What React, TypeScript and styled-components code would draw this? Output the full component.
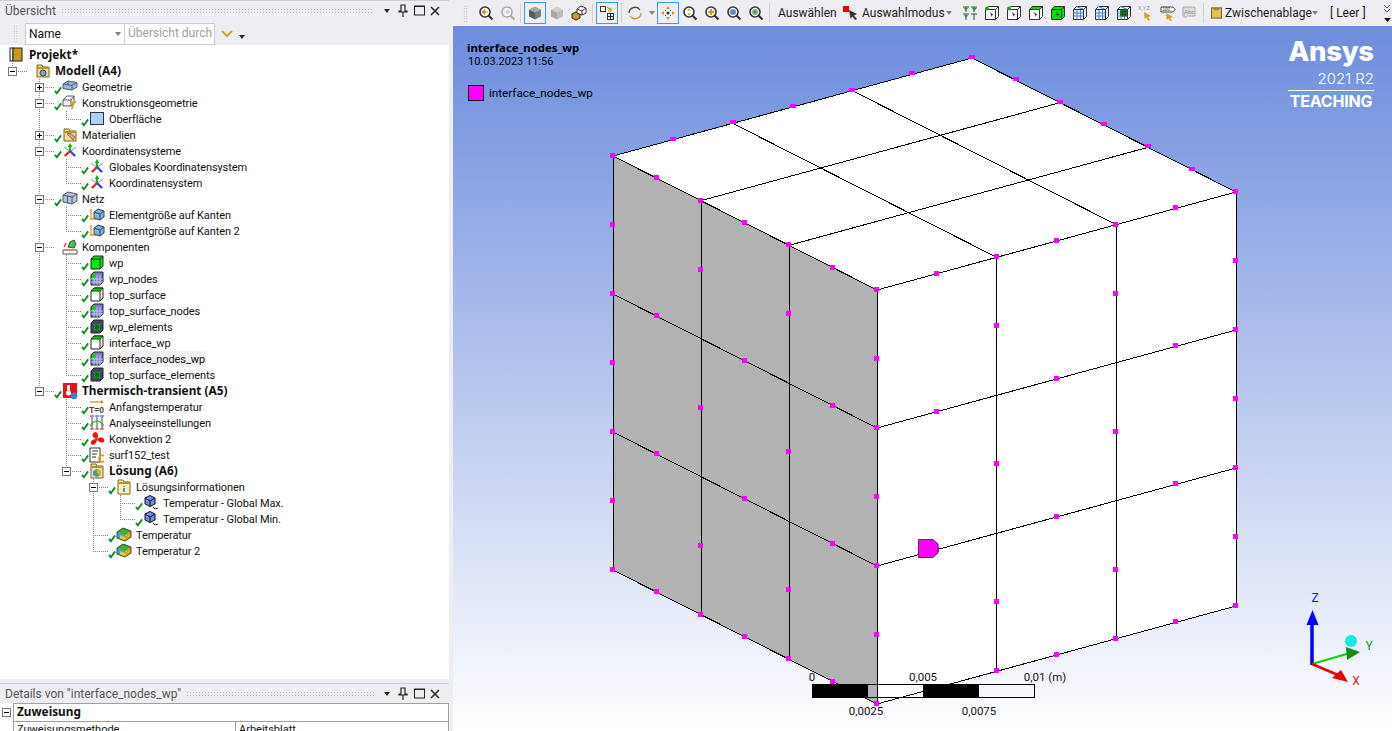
import styled, { createGlobalStyle } from "styled-components";
import { ReactNode } from "react";

const UI_FONT = `Roboto, "Noto Sans", sans-serif`;
const BOLD_FONT = `"Noto Sans", "Open Sans", sans-serif`;

const GlobalStyle = createGlobalStyle`
  html, body {
    margin: 0;
    height: 100%;
    overflow: hidden;
    background: #eef0f8;
  }
  * {
    box-sizing: border-box;
  }
`;

const Shell = styled.div`
  display: grid;
  grid-template-columns: 449px 943px;
  width: 1392px;
  height: 731px;
  overflow: hidden;
  font-family: ${UI_FONT};
  font-size: 11px;
  color: #111;
`;

/* ---------- left side ---------- */

const LeftPane = styled.div`
  display: flex;
  flex-direction: column;
  height: 731px;
  overflow: hidden;
  background: #fff;
`;

const PaneHeader = styled.div`
  display: flex;
  align-items: center;
  flex: none;
  height: 20px;
  padding: 0 5px;
  gap: 5px;
  background: #eeeef2;
  border-top: 1px solid #ccced8;
  color: #555;
  font-size: 12px;
`;

const HeaderDots = styled.div`
  flex: 1;
  height: 6px;
  background-image: radial-gradient(#b4b4b8 0.7px, transparent 0.8px);
  background-size: 3px 3px;
`;

const HeaderIcons = styled.div`
  display: flex;
  align-items: center;
  margin-right: 1px;
`;

const HeaderIconCell = styled.div`
  display: flex;
  align-items: center;
  justify-content: center;
  width: 16px;
  height: 16px;
`;

const FilterBar = styled.div`
  display: flex;
  align-items: center;
  flex: none;
  height: 25px;
  padding: 2px 0 0 13px;
  background: #eeeef2;
`;

const Gripper = styled.div`
  flex: none;
  width: 5px;
  height: 17px;
  background-image: radial-gradient(#aaa 0.7px, transparent 0.8px);
  background-size: 2.5px 2.5px;
`;

const SelectBox = styled.div`
  display: flex;
  align-items: center;
  justify-content: space-between;
  width: 100px;
  height: 22px;
  margin-left: 7px;
  padding: 0 3px;
  background: #fff;
  border: 1px solid #ccced6;
  font-size: 12px;
`;

const SearchBox = styled.div`
  width: 90px;
  height: 22px;
  padding: 2px 3px;
  background: #fff;
  border: 1px solid #ccced6;
  border-left: none;
  color: #a0a0a0;
  font-size: 12px;
  white-space: nowrap;
  overflow: hidden;
`;

const Caret = styled.span<{ $color?: string }>`
  display: inline-block;
  width: 0;
  height: 0;
  border-left: 3.5px solid transparent;
  border-right: 3.5px solid transparent;
  border-top: 4px solid ${(p) => p.$color ?? "#808080"};
`;

const FilterIcon = styled.div<{ $drop?: number }>`
  display: flex;
  margin-left: 4px;
  margin-top: ${(p) => p.$drop ?? 0}px;
`;

const Tree = styled.div`
  flex: 1;
  min-height: 0;
  padding-top: 2px;
  background: #fff;
  overflow: hidden;
`;

const Row = styled.div`
  display: flex;
  height: 16px;
  white-space: nowrap;
`;

const RootSpacer = styled.div`
  flex: none;
  width: 9px;
`;

const Guide = styled.div<{ $on?: boolean }>`
  flex: none;
  width: 27px;
  height: 16px;
  background: ${(p) =>
    p.$on
      ? "repeating-linear-gradient(to bottom, #808080 0 1px, transparent 1px 2px) 12px 0 / 1px 100% no-repeat"
      : "none"};
`;

const Connector = styled.div<{ $last?: boolean }>`
  display: flex;
  align-items: center;
  flex: none;
  width: 27px;
  height: 16px;
  padding-left: 8px;
  background:
    repeating-linear-gradient(to bottom, #808080 0 1px, transparent 1px 2px) 12px 0 / 1px ${(p) => (p.$last ? "8px" : "100%")} no-repeat,
    repeating-linear-gradient(to right, #808080 0 1px, transparent 1px 2px) 12px 8px / 15px 1px no-repeat;
`;

const Toggle = styled.div`
  position: relative;
  flex: none;
  width: 9px;
  height: 9px;
  background: #fff;
  border: 1px solid #777;

  &::before {
    content: "";
    position: absolute;
    left: 1px;
    top: 3px;
    width: 5px;
    height: 1px;
    background: #000;
  }
`;

const PlusToggle = styled(Toggle)`
  &::after {
    content: "";
    position: absolute;
    left: 3px;
    top: 1px;
    width: 1px;
    height: 5px;
    background: #000;
  }
`;

const CheckSlot = styled.div`
  display: flex;
  align-items: flex-end;
  flex: none;
  width: 8px;
  height: 16px;
`;

const IconSlot = styled.div`
  flex: none;
  width: 16px;
  height: 16px;
  margin-right: 4px;
`;

const Label = styled.span<{ $bold?: boolean; $selected?: boolean }>`
  height: 16px;
  padding: 0 1px;
  margin-left: -1px;
  line-height: ${(p) => (p.$bold ? "15px" : "17px")};
  letter-spacing: ${(p) => (p.$bold ? "0" : "-0.1px")};
  font-family: ${(p) => (p.$bold ? BOLD_FONT : UI_FONT)};
  font-size: ${(p) => (p.$bold ? "11.8px" : "11px")};
  font-weight: ${(p) => (p.$bold ? 700 : 400)};
  background: ${(p) => (p.$selected ? "#f0f0f0" : "transparent")};
`;

const Splitter = styled.div`
  flex: none;
  height: 4px;
  background: #eeeef2;
`;

const DetailsSection = styled.div`
  display: flex;
  flex: none;
  height: 28px;
  overflow: hidden;
`;

const DetailsGutter = styled.div`
  flex: none;
  width: 13px;
  padding: 5px 0 0 2px;
`;

const DetailsTable = styled.div`
  flex: 1;
  border-top: 1px solid #a0a0a0;
  border-left: 1px solid #a0a0a0;
  border-right: 1px solid #a0a0a0;
`;

const GroupRow = styled.div`
  height: 18px;
  padding-left: 3px;
  border-bottom: 1px solid #a0a0a0;
  font-family: ${BOLD_FONT};
  font-size: 11.8px;
  font-weight: 700;
  line-height: 15px;
`;

const PropRow = styled.div`
  display: grid;
  grid-template-columns: 221px 1fr;
  height: 18px;
  line-height: 16px;
`;

const PropCell = styled.div`
  padding-left: 3px;

  & + & {
    border-left: 1px solid #a0a0a0;
  }
`;

/* ---------- right side ---------- */

const RightPane = styled.div`
  display: flex;
  flex-direction: column;
  height: 731px;
  background: #eeeef2;
`;

const Toolbar = styled.div`
  display: flex;
  align-items: center;
  flex: none;
  height: 26px;
  padding: 0 0 0 14px;
  white-space: nowrap;
  background: #eeeef2;
`;

const ToolbarGrip = styled(Gripper)`
  margin-right: 7px;
`;

const ToolButton = styled.div<{ $active?: boolean }>`
  display: flex;
  align-items: center;
  justify-content: center;
  flex: none;
  width: 22px;
  height: 22px;
  border: 1px solid ${(p) => (p.$active ? "#3399ff" : "transparent")};
`;

const Separator = styled.div<{ $before?: number; $after?: number }>`
  flex: none;
  width: 1px;
  height: 20px;
  margin-left: ${(p) => p.$before ?? 1}px;
  margin-right: ${(p) => p.$after ?? 3}px;
  background: #cfcfd4;
`;

const ToolText = styled.div<{ $w: number; $ml?: number; $pr?: number }>`
  display: flex;
  align-items: center;
  justify-content: space-between;
  flex: none;
  width: ${(p) => p.$w}px;
  margin-left: ${(p) => p.$ml ?? 0}px;
  padding-right: ${(p) => p.$pr ?? 0}px;
  font-size: 12px;
  color: #1b1b1b;
`;

const CaretButton = styled.div`
  display: flex;
  align-items: center;
  justify-content: center;
  flex: none;
  width: 11px;
  height: 22px;
`;

const Overflow = styled.div`
  display: flex;
  flex: none;
  margin-left: 9px;
`;

const Viewport = styled.div`
  position: relative;
  flex: 1;
  margin-left: 4px;
  background: linear-gradient(to bottom, #6c8cdd 0%, #ffffff 100%);
  overflow: hidden;
`;

const Canvas = styled.svg`
  display: block;
  width: 939px;
  height: 705px;
`;

const Annotation = styled.div`
  position: absolute;
  left: 14px;
  top: 15px;
  font-size: 11.7px;
  line-height: 14px;
  color: #000;
`;

const AnnotationTitle = styled.div`
  font-family: ${BOLD_FONT};
  font-size: 11.4px;
  font-weight: 700;
`;

const AnnotationDate = styled.div`
  margin-left: 1px;
  font-size: 11px;
`;

const Legend = styled.div`
  display: flex;
  align-items: center;
  gap: 5px;
  margin: 16px 0 0 1px;
`;

const LegendSwatch = styled.div`
  width: 16px;
  height: 16px;
  background: #ff00ff;
  border: 1px solid #000;
`;

const Brand = styled.div`
  position: absolute;
  right: 18px;
  top: 8px;
  width: 86px;
  display: flex;
  flex-direction: column;
  align-items: flex-end;
  color: #fff;
  font-family: Inter, "Noto Sans", sans-serif;
`;

const BrandName = styled.div`
  width: 100%;
  text-align: center;
  font-size: 27.5px;
  line-height: 35px;
  font-weight: 800;
  letter-spacing: -0.3px;
  white-space: nowrap;
`;

const BrandRelease = styled.div`
  font-size: 15px;
  line-height: 18px;
  margin-top: 1px;
  font-weight: 300;
`;

const BrandEdition = styled.div`
  width: 100%;
  margin-top: 2px;
  border-top: 1px solid #fff;
  font-size: 16px;
  line-height: 21px;
  font-weight: 700;
  letter-spacing: -0.2px;
  text-align: center;
`;

/* ---------- icons ---------- */

const Check = () => (
  <svg width="9" height="9" viewBox="0 0 9 9">
    <path d="M1 5 L3.2 7.6 L8 1" fill="none" stroke="#0a8a1e" strokeWidth="2" />
  </svg>
);

const treeIcons: Record<string, ReactNode> = {
  project: (
    <>
      <rect x="1" y="1" width="3" height="13" fill="#f4f4f4" stroke="#222" />
      <rect x="4" y="1" width="9" height="13" fill="#c89a10" stroke="#222" />
    </>
  ),
  model: (
    <>
      <path d="M2 14V2h5l1 2h6v10z" fill="#f2dc9b" stroke="#7a6320" />
      <rect x="2" y="4" width="12" height="2" fill="#b8952a" />
      <circle cx="8" cy="10" r="3" fill="#7ea7c8" stroke="#345" />
    </>
  ),
  geometry: (
    <>
      <path d="M1 5 L6 2 L15 3.5 V8 L10 11 L1 9.5z" fill="#9db8dc" stroke="#4a5a70" />
      <path d="M1 5 L10 6.5 V11 M10 6.5 L15 3.5 M6 2 V6" fill="none" stroke="#4a5a70" />
    </>
  ),
  construction: (
    <>
      <path d="M1 5 L5 1 H12 V8 L9 11 H1z" fill="#fff" stroke="#555" />
      <path d="M1 5 H9 V11 M9 5 L12 1" fill="none" stroke="#555" />
      <path d="M12 6 L10 14 M9.5 8 L14 7" stroke="#d8a020" strokeWidth="1.8" fill="none" />
    </>
  ),
  surface: <rect x="1.5" y="1.5" width="13" height="12" fill="#a9d2fb" stroke="#333" />,
  materials: (
    <>
      <path d="M2 14V2h5l1 2h6v10z" fill="#f2dc9b" stroke="#7a6320" />
      <rect x="2" y="4" width="12" height="2" fill="#b8952a" />
      <path d="M5 7 L11 13 L13 10 L8 6z" fill="#e0a27a" stroke="#966" />
    </>
  ),
  coords: (
    <>
      <path d="M2 4 L14 13 M14 4 L2 13" stroke="#9fb0b8" strokeWidth="1.2" />
      <path d="M8 8 V3" stroke="#16b316" strokeWidth="2" />
      <path d="M8 8 L3 13" stroke="#e22" strokeWidth="2.4" />
      <path d="M8 8 L13 13" stroke="#2a4fd0" strokeWidth="2.4" />
      <path d="M8 0 L5.5 4 H10.5z" fill="#16b316" />
    </>
  ),
  mesh: (
    <>
      <path d="M1 4 L6 1 L15 3 V10 L10 13 L1 11z" fill="#b5c3d6" stroke="#556" />
      <path d="M1 4 L10 6 V13 M10 6 L15 3 M5.5 5 V12" fill="none" stroke="#556" />
    </>
  ),
  sizing: (
    <>
      <path d="M2 2 V12 H10" fill="none" stroke="#d8a020" strokeWidth="1.4" />
      <path d="M5 5 L9 2 L15 4 V10 L11 13 L5 11z" fill="#7fb4e6" stroke="#345" />
      <path d="M5 5 L11 7 V13 M11 7 L15 4" fill="none" stroke="#345" />
    </>
  ),
  components: (
    <>
      <path d="M6 8 L8 3 L12 1 L14 5 L12 9z" fill="#43c843" stroke="#444" />
      <path d="M1 11 H15 V15 H1z" fill="#fff" stroke="#555" />
      <path d="M1 11 H15" stroke="#b89a50" strokeWidth="1.5" />
      <path d="M4 4 L2 8" stroke="#e22" strokeWidth="1.2" />
    </>
  ),
  solid: (
    <>
      <path d="M2 4 L5 1 H14 V11 L11 14 H2z" fill="#00ee00" stroke="#222" />
      <path d="M2 4 H11 V14 M11 4 L14 1" fill="none" stroke="#222" />
    </>
  ),
  nodes: (
    <>
      <path d="M2 4 L5 1 H14 V11 L11 14 H2z" fill="#7a7ad0" stroke="#222" />
      <path d="M2 8 H14 M2 11 H14 M5 4 V14 M8 4 V14 M11 4 V14" stroke="#e4e4f4" strokeWidth="0.7" />
      <circle cx="5" cy="5" r="2.2" fill="#10d010" />
    </>
  ),
  face: (
    <>
      <path d="M2 4 L5 1 H14 V11 L11 14 H2z" fill="#fff" stroke="#222" />
      <path d="M2 4 L5 1 H14 L11 4z" fill="#00e000" stroke="#222" />
      <path d="M11 4 V14" stroke="#222" />
    </>
  ),
  elements: (
    <>
      <path d="M2 4 L5 1 H14 V11 L11 14 H2z" fill="#44446a" stroke="#222" />
      <rect x="5" y="5" width="6" height="6" fill="#10e010" />
      <path d="M5 7 H11 M5 9 H11 M7 5 V11 M9 5 V11" stroke="#111" strokeWidth="0.7" />
    </>
  ),
  thermal: (
    <>
      <rect x="1" y="0" width="14" height="15" fill="#ee1111" />
      <rect x="5" y="2" width="3" height="8" fill="#fff" />
      <circle cx="6.5" cy="10" r="2.5" fill="#fff" />
      <circle cx="12" cy="13" r="3.4" fill="#3f7fd8" />
    </>
  ),
  init: (
    <>
      <path d="M1 3 H13" stroke="#c09020" strokeWidth="1.2" />
      <path d="M12 1 L15 3 L12 5z" fill="#c09020" />
      <text x="0" y="14" fontSize="8.5" fontWeight="700" fill="#444" fontFamily="Liberation Sans">T=0</text>
    </>
  ),
  analysis: (
    <>
      <path d="M3 2 V14 M8 2 V14 M13 2 V14" stroke="#444" />
      <path d="M1 1 H5 M6 1 H10 M11 1 H15" stroke="#2222dd" />
      <path d="M1 14 H5 M6 14 H10 M11 14 H15" stroke="#dd2222" />
      <path d="M1 11 Q8 1 15 11" fill="none" stroke="#18b018" strokeWidth="1.2" />
    </>
  ),
  fan: (
    <>
      <path d="M8 8 C3 7 2 3 6 1 C9 1 10 5 8 8z" fill="#ee1111" />
      <path d="M8 8 C13 5 16 7 15 11 C12 12 9 11 8 8z" fill="#ee1111" />
      <path d="M8 8 C8 12 5 15 2 13 C1 10 4 8 8 8z" fill="#ee1111" />
    </>
  ),
  command: (
    <>
      <rect x="1" y="1" width="10" height="14" fill="#fff" stroke="#333" />
      <path d="M3 4 H9 M3 7 H8 M3 10 H7" stroke="#333" />
      <path d="M15 9 A3 3.2 0 1 0 15 14" fill="none" stroke="#d8a020" strokeWidth="1.8" />
    </>
  ),
  solution: (
    <>
      <path d="M2 15V1h5l1 2h6v12z" fill="#e8e0c0" stroke="#7a6320" />
      <rect x="2" y="3" width="12" height="2" fill="#b8952a" />
      <path d="M4 8 L8 6 L12 8 V12 L8 14 L4 12z" fill="#4ab04a" />
      <path d="M8 6 L12 8 V12 L8 10z" fill="#e8b020" />
      <path d="M4 8 L8 10 V14 L4 12z" fill="#3f8fd8" />
    </>
  ),
  info: (
    <>
      <path d="M2 15V1h5l1 2h6v12z" fill="#fbf0b8" stroke="#7a6320" />
      <rect x="2" y="3" width="12" height="2" fill="#b8952a" />
      <path d="M8 7 V8 M8 9 V13" stroke="#2a6fd0" strokeWidth="1.5" />
    </>
  ),
  probe: (
    <>
      <path d="M2 3 L7 0.5 L12 3 V9 L7 11.5 L2 9z" fill="#6f8fe8" stroke="#111" />
      <path d="M2 3 L7 6 L12 3 M7 6 V11.5" fill="none" stroke="#111" />
      <path d="M10 12 L12 14 L15 13" fill="none" stroke="#222" />
    </>
  ),
  result: (
    <>
      <path d="M1 5 L7 1 L15 4 V10 L9 14 L1 11z" fill="#888" />
      <path d="M1 5 L9 8 V14 L1 11z" fill="#2fa8d8" />
      <path d="M9 8 L15 4 V10 L9 14z" fill="#e8a020" />
      <path d="M1 5 L7 1 L15 4 L9 8z" fill="#34b334" />
      <path d="M4 8 L9 10 V14 L4 12z" fill="#e8d020" />
      <path d="M1 5 L7 1 L15 4 V10 L9 14 L1 11z" fill="none" stroke="#444" />
    </>
  ),
};

const TreeIcon = ({ name }: { name: string }) => (
  <svg width="16" height="16" viewBox="0 0 16 16">
    {treeIcons[name]}
  </svg>
);

const Lens = ({ children, color = "#333" }: { children?: ReactNode; color?: string }) => (
  <svg width="16" height="16" viewBox="0 0 16 16">
    <circle cx="7" cy="7" r="5" fill="#fff" stroke={color} strokeWidth="1.6" />
    <path d="M10.5 10.5 L14.5 14.5" stroke={color} strokeWidth="2.2" />
    {children}
  </svg>
);

const Cube = ({ top, left, right }: { top: string; left: string; right: string }) => (
  <svg width="16" height="16" viewBox="0 0 16 16">
    <path d="M2 4.5 L8 1.5 L14 4.5 L8 7.5z" fill={top} />
    <path d="M2 4.5 L8 7.5 V14.5 L2 11.5z" fill={left} />
    <path d="M14 4.5 L8 7.5 V14.5 L14 11.5z" fill={right} />
  </svg>
);

const GridCube = ({ dark }: { dark?: boolean }) => (
  <svg width="16" height="16" viewBox="0 0 16 16">
    <path d="M1.5 4.5 L4.5 1.5 H14.5 V11.5 L11.5 14.5 H1.5z" fill="#e4eefa" stroke="#333" />
    <path d="M1.5 8 H11.5 M1.5 11 H11.5 M5 4.5 V14.5 M8.5 4.5 V14.5 M4.5 1.5 L11.5 4.5" stroke="#4f82c8" fill="none" />
    {dark && <rect x="4" y="4.5" width="7" height="7" fill="#149c14" />}
    {dark && <path d="M4 7 H11 M4 9.5 H11 M6.5 4.5 V11.5 M9 4.5 V11.5" stroke="#222" strokeWidth="0.7" />}
    <path d="M1.5 4.5 H11.5 V14.5 M11.5 4.5 L14.5 1.5" fill="none" stroke="#333" />
  </svg>
);

const CornerCube = ({ top, side, dot }: { top?: string; side?: string; dot?: boolean }) => (
  <svg width="16" height="16" viewBox="0 0 16 16">
    <path d="M1.5 4.5 L4.5 1.5 H14.5 V11.5 L11.5 14.5 H1.5z" fill={side ?? "#fff"} stroke="#333" />
    {top && <path d="M1.5 4.5 L4.5 1.5 H14.5 L11.5 4.5z" fill={top} stroke="#333" />}
    <path d="M1.5 4.5 H11.5 V14.5 M11.5 4.5 L14.5 1.5" fill="none" stroke="#333" />
    {dot && <circle cx="3" cy="3.5" r="2" fill="#18a018" />}
    <path d="M6 7 L9.5 10 L7.8 10.2 L7.8 12.5z" fill="#333" />
  </svg>
);

const PaneControls = () => (
  <HeaderIcons>
    <HeaderIconCell>
      <Caret $color="#222" />
    </HeaderIconCell>
    <HeaderIconCell>
      <svg width="10" height="13" viewBox="0 0 10 13">
        <path d="M3 1 H7 V7 H9 V8 H1 V7 H3z M5 8 V13" fill="none" stroke="#222" strokeWidth="1.2" />
      </svg>
    </HeaderIconCell>
    <HeaderIconCell>
      <svg width="11" height="11" viewBox="0 0 11 11">
        <rect x="0.5" y="1" width="10" height="9" fill="none" stroke="#222" />
        <path d="M0.5 1.5 H10.5" stroke="#222" />
      </svg>
    </HeaderIconCell>
    <HeaderIconCell>
      <svg width="10" height="10" viewBox="0 0 10 10">
        <path d="M1 1 L9 9 M9 1 L1 9" stroke="#222" strokeWidth="1.5" />
      </svg>
    </HeaderIconCell>
  </HeaderIcons>
);

/* ---------- tree data ---------- */

interface TreeNode {
  label: string;
  icon: string;
  guides: boolean[];
  toggle?: "minus" | "plus";
  last?: boolean;
  bold?: boolean;
  selected?: boolean;
  noCheck?: boolean;
}

const treeNodes: TreeNode[] = [
  { label: "Modell (A4)", icon: "model", guides: [], toggle: "minus", last: true, bold: true, noCheck: true },
  { label: "Geometrie", icon: "geometry", guides: [false], toggle: "plus" },
  { label: "Konstruktionsgeometrie", icon: "construction", guides: [false], toggle: "minus" },
  { label: "Oberfläche", icon: "surface", guides: [false, true], last: true },
  { label: "Materialien", icon: "materials", guides: [false], toggle: "plus" },
  { label: "Koordinatensysteme", icon: "coords", guides: [false], toggle: "minus" },
  { label: "Globales Koordinatensystem", icon: "coords", guides: [false, true] },
  { label: "Koordinatensystem", icon: "coords", guides: [false, true], last: true },
  { label: "Netz", icon: "mesh", guides: [false], toggle: "minus" },
  { label: "Elementgröße auf Kanten", icon: "sizing", guides: [false, true] },
  { label: "Elementgröße auf Kanten 2", icon: "sizing", guides: [false, true], last: true },
  { label: "Komponenten", icon: "components", guides: [false], toggle: "minus", noCheck: true },
  { label: "wp", icon: "solid", guides: [false, true] },
  { label: "wp_nodes", icon: "nodes", guides: [false, true] },
  { label: "top_surface", icon: "face", guides: [false, true] },
  { label: "top_surface_nodes", icon: "nodes", guides: [false, true] },
  { label: "wp_elements", icon: "elements", guides: [false, true] },
  { label: "interface_wp", icon: "face", guides: [false, true] },
  { label: "interface_nodes_wp", icon: "nodes", guides: [false, true], selected: true },
  { label: "top_surface_elements", icon: "elements", guides: [false, true], last: true },
  { label: "Thermisch-transient (A5)", icon: "thermal", guides: [false], toggle: "minus", last: true, bold: true },
  { label: "Anfangstemperatur", icon: "init", guides: [false, false] },
  { label: "Analyseeinstellungen", icon: "analysis", guides: [false, false] },
  { label: "Konvektion 2", icon: "fan", guides: [false, false] },
  { label: "surf152_test", icon: "command", guides: [false, false] },
  { label: "Lösung (A6)", icon: "solution", guides: [false, false], toggle: "minus", last: true, bold: true },
  { label: "Lösungsinformationen", icon: "info", guides: [false, false, false], toggle: "minus" },
  { label: "Temperatur - Global Max.", icon: "probe", guides: [false, false, false, true] },
  { label: "Temperatur - Global Min.", icon: "probe", guides: [false, false, false, true], last: true },
  { label: "Temperatur", icon: "result", guides: [false, false, false] },
  { label: "Temperatur 2", icon: "result", guides: [false, false, false], last: true },
];

const TreeRow = ({ node }: { node: TreeNode }) => (
  <Row>
    {node.guides.map((on, i) => (
      <Guide key={i} $on={on} />
    ))}
    <Connector $last={node.last}>
      {node.toggle === "minus" && <Toggle />}
      {node.toggle === "plus" && <PlusToggle />}
    </Connector>
    <CheckSlot>{!node.noCheck && <Check />}</CheckSlot>
    <IconSlot>
      <TreeIcon name={node.icon} />
    </IconSlot>
    <Label $bold={node.bold} $selected={node.selected}>
      {node.label}
    </Label>
  </Row>
);

/* ---------- model view ---------- */

type Pt = [number, number];

const D: Pt = [877, 290];
const toA: Pt = [-264, -134];
const toC: Pt = [359, -98];
const DOWN = 414;

// u along D->A, v along D->C, w downwards
const at = (u: number, v: number, w: number): Pt => [
  D[0] + toA[0] * u + toC[0] * v,
  D[1] + toA[1] * u + toC[1] * v + DOWN * w,
];

const pts = (...list: Pt[]) => list.map((p) => p.join(",")).join(" ");

const thirds = [0, 1 / 3, 2 / 3, 1];

const gridLines: [Pt, Pt][] = [
  ...thirds.map((t): [Pt, Pt] => [at(t, 0, 0), at(t, 1, 0)]),
  ...thirds.map((t): [Pt, Pt] => [at(0, t, 0), at(1, t, 0)]),
  ...thirds.map((t): [Pt, Pt] => [at(t, 0, 0), at(t, 0, 1)]),
  ...thirds.map((t): [Pt, Pt] => [at(0, t, 0), at(0, t, 1)]),
  ...thirds.map((t): [Pt, Pt] => [at(0, 0, t), at(1, 0, t)]),
  ...thirds.map((t): [Pt, Pt] => [at(0, 0, t), at(0, 1, t)]),
];

const faceNodes = (map: (s: number, w: number) => Pt): Pt[] => {
  const out: Pt[] = [];
  for (let i = 0; i <= 6; i++) {
    for (let j = 0; j <= 6; j++) {
      if (i % 2 && j % 2) continue;
      // interior mesh corners carry no node in the picture
      if (i % 2 === 0 && j % 2 === 0 && i > 0 && i < 6 && j > 0 && j < 6) continue;
      out.push(map(i / 6, j / 6));
    }
  }
  return out;
};

const sideNodes = [
  ...faceNodes((s, w) => at(s, 0, w)),
  ...faceNodes((s, w) => at(0, s, w)),
];

const topEdgeNodes: Pt[] = [1, 2, 3, 4, 5, 6].flatMap((i): Pt[] => [
  at(1, i / 6, 0),
  at(i / 6, 1, 0),
]);

const ScaleBar = () => (
  <g fontFamily={UI_FONT} fontSize="11.5" fill="#111">
    <rect x="812" y="684" width="56" height="13" fill="#000" />
    <rect x="923" y="684" width="56" height="13" fill="#000" />
    <rect x="812.5" y="684.5" width="222" height="13" fill="none" stroke="#000" />
    <text x="812" y="681" textAnchor="middle">0</text>
    <text x="923" y="681" textAnchor="middle">0,005</text>
    <text x="1045" y="681" textAnchor="middle">0,01 (m)</text>
    <text x="866" y="715" textAnchor="middle">0,0025</text>
    <text x="979" y="715" textAnchor="middle">0,0075</text>
  </g>
);

const Triad = () => (
  <g fontFamily={UI_FONT} fontSize="12">
    <path d="M1312 665 V620" stroke="#0000ff" strokeWidth="3.5" />
    <path d="M1312.5 610 L1306.5 625 H1318.5z" fill="#0000ff" />
    <path d="M1312 664 L1350 653" stroke="#00d800" strokeWidth="2" />
    <path d="M1346 647 L1360 652 L1347 660z" fill="#128c12" />
    <path d="M1312 664 L1338 675" stroke="#ee0000" strokeWidth="2.5" />
    <path d="M1348 682 L1332 678 L1341 670z" fill="#ee0000" />
    <circle cx="1351" cy="641" r="6" fill="#19e6e6" />
    <text x="1315" y="602" textAnchor="middle" fill="#1a1aee">Z</text>
    <text x="1369" y="650" textAnchor="middle" fill="#12a012">Y</text>
    <text x="1356" y="685" textAnchor="middle" fill="#ee1111">X</text>
  </g>
);

const ModelView = () => (
  <Canvas viewBox="453 26 939 705">
    <polygon points={pts(at(0, 0, 0), at(1, 0, 0), at(1, 1, 0), at(0, 1, 0))} fill="#fff" />
    <polygon points={pts(at(0, 0, 0), at(1, 0, 0), at(1, 0, 1), at(0, 0, 1))} fill="#b2b2b2" />
    <polygon points={pts(at(0, 0, 0), at(0, 1, 0), at(0, 1, 1), at(0, 0, 1))} fill="#fff" />
    <g stroke="#000" strokeWidth="1" shapeRendering="crispEdges">
      {gridLines.map(([a, b], i) => (
        <line key={i} x1={a[0]} y1={a[1]} x2={b[0]} y2={b[1]} />
      ))}
    </g>
    <g fill="#ff00ff" shapeRendering="crispEdges">
      {sideNodes.map((p, i) => (
        <rect key={i} x={p[0] - 3} y={p[1] - 3} width="5" height="5" />
      ))}
      {topEdgeNodes.map((p, i) => (
        <rect key={i} x={p[0] - 3} y={p[1] - 3} width="6" height="4" />
      ))}
    </g>
    <polygon
      points="918.5,539.5 933,539.5 938,544 938,553 933,557.5 918.5,557.5"
      fill="#ff00ff"
      stroke="#222"
      strokeWidth="0.8"
    />
    <ScaleBar />
    <Triad />
  </Canvas>
);

/* ---------- page ---------- */

const App = () => (
  <Shell>
    <GlobalStyle />
    <LeftPane>
      <PaneHeader>
        Übersicht
        <HeaderDots />
        <PaneControls />
      </PaneHeader>
      <FilterBar>
        <Gripper />
        <SelectBox>
          Name
          <Caret />
        </SelectBox>
        <SearchBox>Übersicht durch</SearchBox>
        <FilterIcon>
          <svg width="16" height="12" viewBox="0 0 16 12">
            <path d="M3 3 L8 8 L13 3" fill="none" stroke="#d0a030" strokeWidth="2" />
          </svg>
        </FilterIcon>
        <FilterIcon $drop={7}>
          <Caret $color="#222" />
        </FilterIcon>
      </FilterBar>
      <Tree>
        <Row>
          <RootSpacer />
          <IconSlot>
            <TreeIcon name="project" />
          </IconSlot>
          <Label $bold>Projekt*</Label>
        </Row>
        {treeNodes.map((node, i) => (
          <TreeRow key={i} node={node} />
        ))}
      </Tree>
      <Splitter />
      <PaneHeader>
        Details von "interface_nodes_wp"
        <HeaderDots />
        <PaneControls />
      </PaneHeader>
      <DetailsSection>
        <DetailsGutter>
          <Toggle />
        </DetailsGutter>
        <DetailsTable>
          <GroupRow>Zuweisung</GroupRow>
          <PropRow>
            <PropCell>Zuweisungsmethode</PropCell>
            <PropCell>Arbeitsblatt</PropCell>
          </PropRow>
        </DetailsTable>
      </DetailsSection>
    </LeftPane>
    <RightPane>
      <Toolbar>
        <ToolbarGrip />
        <ToolButton>
          <Lens>
            <path d="M4 7 H10 M4 7 L7 4.5 V9.5z" stroke="#c89a20" fill="#c89a20" />
          </Lens>
        </ToolButton>
        <ToolButton>
          <Lens color="#a8a8a8">
            <path d="M4 7 H10 M10 7 L7 4.5 V9.5z" stroke="#ccc" fill="#ccc" />
          </Lens>
        </ToolButton>
        <Separator />
        <ToolButton $active>
          <Cube top="#a8a8a8" left="#5a5a5a" right="#7a7a7a" />
        </ToolButton>
        <ToolButton>
          <Cube top="#cfcfcf" left="#a8a8a8" right="#bdbdbd" />
        </ToolButton>
        <ToolButton>
          <svg width="16" height="16" viewBox="0 0 16 16">
            <path d="M1 9 L5 7 L9 9 V13 L5 15 L1 13z" fill="#c89a20" stroke="#222" />
            <path d="M6 4 L10 1 L15 3 V8 L11 10 L6 8z" fill="#fff" stroke="#333" />
            <path d="M6 4 L11 6 V10 M11 6 L15 3" fill="none" stroke="#333" />
          </svg>
        </ToolButton>
        <Separator $before={2} $after={3} />
        <ToolButton $active>
          <svg width="16" height="16" viewBox="0 0 16 16">
            <rect x="1.5" y="1.5" width="5" height="5" fill="#fff" stroke="#333" />
            <rect x="8.5" y="8.5" width="6" height="6" fill="#fff" stroke="#333" />
            <path d="M8.5 11.5 H14.5 M11.5 8.5 V14.5" stroke="#333" />
            <path d="M8 2 L12 5 M12 2.5 V6 H9" fill="none" stroke="#c89a20" strokeWidth="1.2" />
          </svg>
        </ToolButton>
        <Separator $before={3} $after={2} />
        <ToolButton>
          <svg width="16" height="16" viewBox="0 0 16 16">
            <path d="M2 8 A6 6 0 0 1 13 5" fill="none" stroke="#444" strokeWidth="1.3" />
            <path d="M14 8 A6 6 0 0 1 3 11" fill="none" stroke="#c89a20" strokeWidth="1.3" />
          </svg>
        </ToolButton>
        <CaretButton>
          <Caret />
        </CaretButton>
        <ToolButton $active>
          <svg width="16" height="16" viewBox="0 0 16 16">
            <path d="M8 1 L10 4 H6z M8 15 L10 12 H6z M1 8 L4 6 V10z M15 8 L12 6 V10z" fill="#c89a20" />
            <circle cx="8" cy="8" r="1.5" fill="#333" />
            <path d="M5 5 L6 6 M11 5 L10 6 M5 11 L6 10 M11 11 L10 10" stroke="#333" />
          </svg>
        </ToolButton>
        <ToolButton>
          <Lens>
            <path d="M7 3.5 L9 5.5 H5z M7 10.5 L9 8.5 H5z" fill="#c89a20" />
          </Lens>
        </ToolButton>
        <ToolButton>
          <Lens>
            <path d="M4 7 H10 M7 4 V10" stroke="#c89a20" strokeWidth="2" />
          </Lens>
        </ToolButton>
        <ToolButton>
          <Lens>
            <circle cx="7" cy="7" r="3" fill="#5c8fc8" />
          </Lens>
        </ToolButton>
        <ToolButton>
          <Lens>
            <circle cx="7" cy="7" r="3" fill="#8fa8a0" />
            <circle cx="7" cy="7" r="1.3" fill="#18b018" />
          </Lens>
        </ToolButton>
        <Separator $before={2} $after={8} />
        <ToolText $w={62}>Auswählen</ToolText>
        <ToolButton>
          <svg width="16" height="16" viewBox="0 0 16 16">
            <rect x="0" y="1" width="6" height="6" fill="#ee0000" />
            <path d="M6 5 L14 9 L11 10.5 L14 14 L12 15 L9.5 11.5 L7.5 13.5z" fill="#333" />
          </svg>
        </ToolButton>
        <ToolText $w={97} $pr={7}>
          Auswahlmodus
          <Caret />
        </ToolText>
        <ToolButton>
          <svg width="16" height="16" viewBox="0 0 16 16">
            <path d="M1 2 H7 M9 2 H15 M1 9 H7 M9 9 H15 M4 2 V7 M12 2 V7 M4 9 V15 M12 9 V15" stroke="#444" />
            <path d="M2 3 L6 3 L4 6z M10 3 H15 L12 6z M2 10 H6 L4 13z" fill="#18a018" />
          </svg>
        </ToolButton>
        <ToolButton>
          <CornerCube dot />
        </ToolButton>
        <ToolButton>
          <CornerCube dot />
        </ToolButton>
        <ToolButton>
          <CornerCube top="#00e000" />
        </ToolButton>
        <ToolButton>
          <CornerCube top="#00e000" side="#00e000" />
        </ToolButton>
        <ToolButton>
          <GridCube />
        </ToolButton>
        <ToolButton>
          <GridCube />
        </ToolButton>
        <ToolButton>
          <GridCube dark />
        </ToolButton>
        <ToolButton>
          <svg width="16" height="16" viewBox="0 0 16 16">
            <text x="0" y="5" fontSize="5" fontFamily="Liberation Sans" fill="#888">X,Y,Z</text>
            <path d="M6 7 L13 11 L10 12 L12 15 L10 15.5 L8.5 12.5 L6.5 14z" fill="#d8a020" />
          </svg>
        </ToolButton>
        <ToolButton>
          <svg width="16" height="16" viewBox="0 0 16 16">
            <path d="M1 2 H13 L15 4.5 L13 7 H1z" fill="#fff" stroke="#444" />
            <text x="2.5" y="6" fontSize="4.5" fontFamily="Liberation Sans" fill="#222">100</text>
            <path d="M6 8 L13 12 L10 13 L12 16 L10 16 L8.5 13.5 L6.5 15z" fill="#d8a020" />
          </svg>
        </ToolButton>
        <ToolButton>
          <svg width="16" height="16" viewBox="0 0 16 16">
            <path d="M1 2 H13 V11 H5 L3 13 V11 H1z" fill="#ddd" stroke="#aaa" />
            <text x="2" y="9" fontSize="6" fontFamily="Liberation Sans" fill="#888">Abc</text>
          </svg>
        </ToolButton>
        <Separator $before={2} $after={7} />
        <svg width="14" height="14" viewBox="0 0 14 14">
          <rect x="0.5" y="0.5" width="13" height="13" fill="#e8c048" stroke="#444" />
          <path d="M4 1 H10 V3 H4z" fill="#c8a030" stroke="#444" strokeWidth="0.5" />
        </svg>
        <ToolText $w={93} $ml={3}>
          Zwischenablage
          <Caret />
        </ToolText>
        <ToolText $w={44} $ml={12}>
          [ Leer ]
        </ToolText>
        <Overflow>
          <svg width="9" height="22" viewBox="0 0 9 22">
            <path d="M1 3 L4 6 L7 3 M1 7 L4 10 L7 7" fill="none" stroke="#666" />
            <path d="M1 16 H8 L4.5 20z" fill="#111" />
          </svg>
        </Overflow>
      </Toolbar>
      <Viewport>
        <ModelView />
        <Annotation>
          <AnnotationTitle>interface_nodes_wp</AnnotationTitle>
          <AnnotationDate>10.03.2023 11:56</AnnotationDate>
          <Legend>
            <LegendSwatch />
            interface_nodes_wp
          </Legend>
        </Annotation>
        <Brand>
          <BrandName>Ansys</BrandName>
          <BrandRelease>2021 R2</BrandRelease>
          <BrandEdition>TEACHING</BrandEdition>
        </Brand>
      </Viewport>
    </RightPane>
  </Shell>
);

export default App;
